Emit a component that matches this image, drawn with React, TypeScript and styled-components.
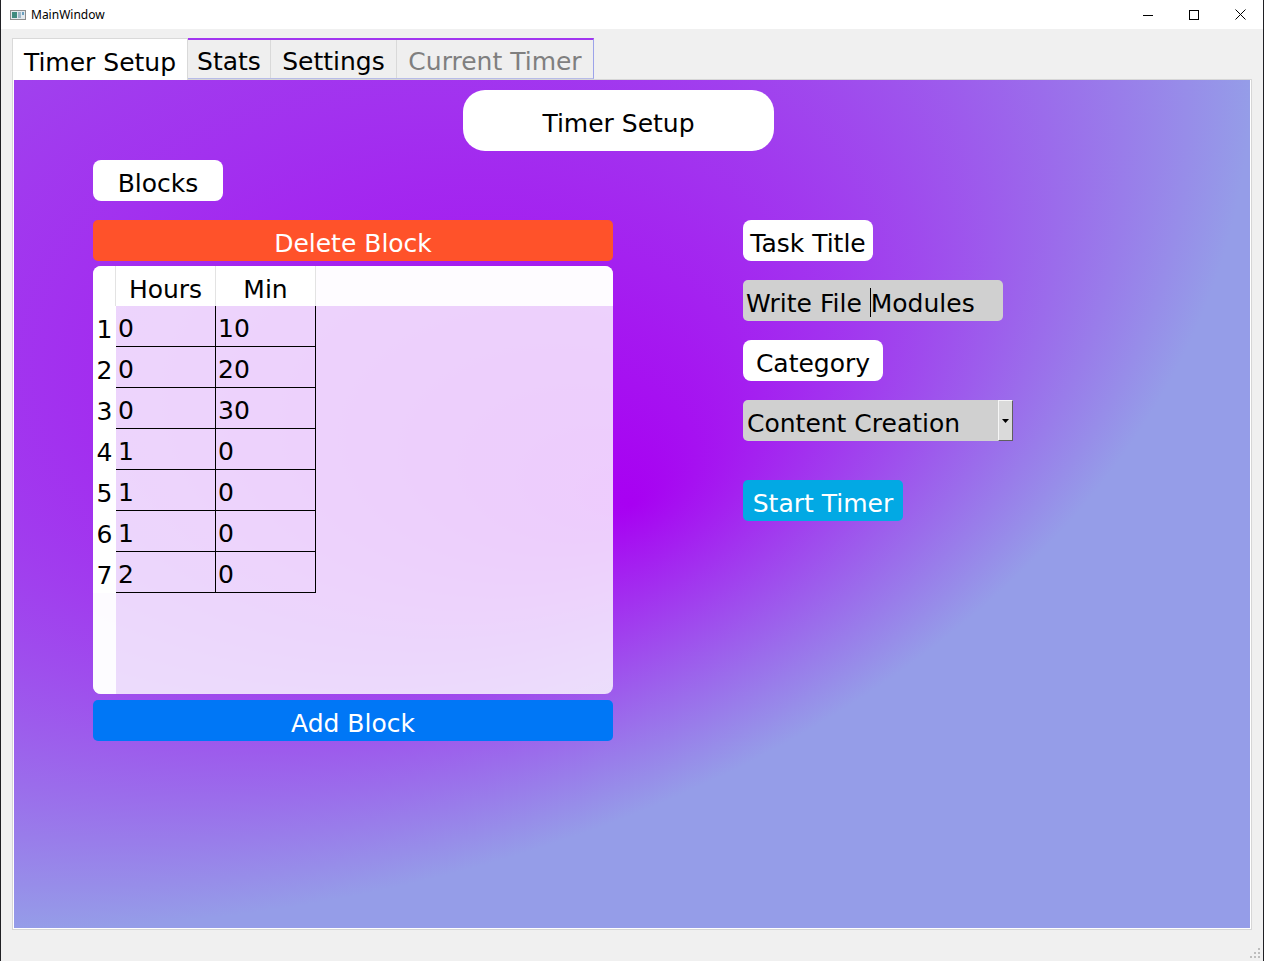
import React from "react";
import styled, { createGlobalStyle } from "styled-components";

const UI_FONT = `"DejaVu Sans", "Liberation Sans", sans-serif`;

const GlobalStyle = createGlobalStyle`
  html, body { margin: 0; padding: 0; background: #f0f0f0; }
  body { overflow: hidden; }
  * { box-sizing: border-box; }
`;

const gradientSvg = `<svg xmlns='http://www.w3.org/2000/svg' viewBox='0 0 1 1' preserveAspectRatio='none'><defs><radialGradient id='g' cx='0' cy='0' r='1' fx='0.5' fy='0.5'><stop offset='0' stop-color='#a800f2'/><stop offset='1' stop-color='#959de8'/></radialGradient></defs><rect width='1' height='1' fill='url(#g)'/></svg>`;
const gradientUrl = `url("data:image/svg+xml,${encodeURIComponent(gradientSvg)}")`;

const Window = styled.div`
  width: 1264px;
  height: 961px;
  display: flex;
  flex-direction: column;
  background: #f0f0f0;
  border-left: 1px solid #202024;
  border-right: 1px solid #202024;
  font-family: ${UI_FONT};
  color: #000;
`;

const TitleBar = styled.div`
  flex: none;
  height: 29px;
  background: #fff;
  display: flex;
  align-items: center;
  padding-left: 9px;
`;

const AppIcon = styled.svg`
  flex: none;
  width: 16px;
  height: 16px;
`;

const TitleText = styled.span`
  margin-left: 5px;
  font-family: "Noto Sans", "Liberation Sans", sans-serif;
  font-size: 12px;
  color: #000;
`;

const Controls = styled.div`
  margin-left: auto;
  display: flex;
  height: 100%;
`;

const ControlButton = styled.div`
  width: 46px;
  height: 29px;
  display: flex;
  align-items: center;
  justify-content: center;
`;

const Central = styled.div`
  flex: none;
  padding: 9px 11px 0 11px;
  display: flex;
  flex-direction: column;
`;

const TabBar = styled.div`
  display: flex;
  align-items: flex-start;
  height: 41px;
  font-size: 25px;
`;

const ActiveTab = styled.div`
  position: relative;
  z-index: 1;
  width: 176px;
  height: 42px;
  background: #fff;
  border: 1px solid #d9d9d9;
  border-bottom: none;
  display: flex;
  align-items: center;
  justify-content: center;
  padding-top: 6px;
`;

const TabGroup = styled.div`
  display: flex;
  height: 41px;
  border-top: 2px solid #a236f0;
  border-right: 1px solid #9ca3ea;
  border-bottom: 1px solid #b7bbe8;
`;

const Tab = styled.div<{ $w: number; $disabled?: boolean; $last?: boolean }>`
  width: ${(p) => p.$w}px;
  height: 100%;
  background: #efefef;
  border-right: ${(p) => (p.$last ? "none" : "1px solid #d9d9d9")};
  color: ${(p) => (p.$disabled ? "#7f7f7f" : "#000")};
  display: flex;
  align-items: center;
  justify-content: center;
  padding-top: 4px;
`;

const Pane = styled.div`
  height: 851px;
  border: 1px solid #d6d6d6;
  box-shadow: inset 1px 0 0 #fff, inset -1px 0 0 #fff, inset 0 -1px 0 #fff;
  background: ${gradientUrl} center / 100% 100% no-repeat;
  padding: 10px 0 0 80px;
  display: flex;
  flex-direction: column;
  font-size: 25px;
`;

const HeaderPill = styled.div`
  margin-left: 370px;
  width: 311px;
  height: 61px;
  border-radius: 22px;
  background: #fff;
  display: flex;
  align-items: center;
  justify-content: center;
  padding-top: 5px;
`;

const Columns = styled.div`
  display: flex;
  align-items: flex-start;
  margin-top: 9px;
`;

const LeftCol = styled.div`
  width: 520px;
  display: flex;
  flex-direction: column;
`;

const RightCol = styled.div`
  margin-left: 130px;
  margin-top: 60px;
  display: flex;
  flex-direction: column;
  gap: 19px;
`;

const Label = styled.div<{ $w: number }>`
  width: ${(p) => p.$w}px;
  height: 41px;
  background: #fff;
  border-radius: 8px;
  display: flex;
  align-items: center;
  justify-content: center;
  padding-top: 5px;
`;

const ActionButton = styled.div<{ $bg: string; $w?: number; $mt?: number }>`
  width: ${(p) => (p.$w ? `${p.$w}px` : "100%")};
  height: 41px;
  margin-top: ${(p) => p.$mt ?? 0}px;
  background: ${(p) => p.$bg};
  color: #fff;
  border-radius: 5px;
  display: flex;
  align-items: center;
  justify-content: center;
  padding-top: 5px;
`;

const TableFrame = styled.div`
  margin-top: 5px;
  height: 428px;
  border-radius: 8px;
  overflow: hidden;
  background: rgba(255, 255, 255, 0.8);
  display: grid;
  grid-template-columns: 23px 1fr;
  grid-template-rows: 40px 1fr;
`;

const Corner = styled.div`
  background: #fff;
  border-right: 1px solid #e3e3e3;
`;

const HeaderRow = styled.div`
  display: flex;
  background: rgba(255, 255, 255, 0.93);
`;

const HeaderCell = styled.div`
  width: 100px;
  height: 100%;
  background: #fff;
  border-right: 1px solid #e3e3e3;
  display: flex;
  align-items: center;
  justify-content: center;
  padding-top: 6px;
`;

const RowHeaderCol = styled.div`
  display: flex;
  flex-direction: column;
  background: rgba(255, 255, 255, 0.9);
`;

const RowNum = styled.div`
  height: 41px;
  background: #fff;
  display: flex;
  align-items: center;
  justify-content: center;
  padding-top: 5px;
`;

const Body = styled.div`
  display: grid;
  grid-template-columns: 100px 100px;
  grid-auto-rows: 41px;
  align-content: start;
`;

const Cell = styled.div`
  border-right: 1px solid #000;
  border-bottom: 1px solid #000;
  padding: 5px 0 0 2px;
  display: flex;
  align-items: center;
`;

const LineEdit = styled.div`
  width: 260px;
  height: 41px;
  background: #d0d0d0;
  border-radius: 5px;
  padding: 5px 0 0 3px;
  display: flex;
  align-items: center;
  white-space: pre;
`;

const Caret = styled.span`
  display: inline-block;
  width: 1px;
  height: 29px;
  margin-top: -2px;
  background: #000;
`;

const Combo = styled.div`
  width: 270px;
  height: 41px;
  display: flex;
  background: #d0d0d0;
  border-radius: 5px 0 0 5px;
`;

const ComboText = styled.div`
  flex: 1;
  padding: 5px 0 0 4px;
  display: flex;
  align-items: center;
  white-space: nowrap;
`;

const DropButton = styled.div`
  width: 15px;
  height: 100%;
  background: #dadada;
  border: 1px solid;
  border-color: #f6f6f6 #5f5f5f #5f5f5f #f6f6f6;
  display: flex;
  align-items: center;
  justify-content: center;
`;

const StatusBar = styled.div`
  flex: 1;
  display: flex;
  justify-content: flex-end;
  align-items: flex-end;
  padding: 0 2px 2px 0;
`;

const GripIcon = styled.svg`
  width: 11px;
  height: 11px;
`;

const rows: [string, string][] = [
  ["0", "10"],
  ["0", "20"],
  ["0", "30"],
  ["1", "0"],
  ["1", "0"],
  ["1", "0"],
  ["2", "0"],
];

export default function App() {
  return (
    <>
      <GlobalStyle />
      <Window>
        <TitleBar>
          <AppIcon viewBox="0 0 16 16">
            <rect x="0.5" y="3.5" width="15" height="9" fill="#e3e9ee" stroke="#8d8d8d" />
            <rect x="2" y="5" width="5" height="6" fill="#3f8b7f" />
            <rect x="8" y="5" width="3" height="6" fill="#9fb8c8" />
            <rect x="12" y="5" width="2" height="3" fill="#6a9fbf" />
          </AppIcon>
          <TitleText>MainWindow</TitleText>
          <Controls>
            <ControlButton>
              <svg width="10" height="10" viewBox="0 0 10 10">
                <line x1="0" y1="5.5" x2="10" y2="5.5" stroke="#000" strokeWidth="1" />
              </svg>
            </ControlButton>
            <ControlButton>
              <svg width="10" height="10" viewBox="0 0 10 10">
                <rect x="0.5" y="0.5" width="9" height="9" fill="none" stroke="#000" strokeWidth="1" />
              </svg>
            </ControlButton>
            <ControlButton>
              <svg width="11" height="11" viewBox="0 0 11 11">
                <path d="M0.5 0.5 L10.5 10.5 M10.5 0.5 L0.5 10.5" stroke="#000" strokeWidth="1" />
              </svg>
            </ControlButton>
          </Controls>
        </TitleBar>

        <Central>
          <TabBar>
            <ActiveTab>Timer Setup</ActiveTab>
            <TabGroup>
              <Tab $w={83}>Stats</Tab>
              <Tab $w={126}>Settings</Tab>
              <Tab $w={196} $disabled $last>
                Current Timer
              </Tab>
            </TabGroup>
          </TabBar>

          <Pane>
            <HeaderPill>Timer Setup</HeaderPill>
            <Columns>
              <LeftCol>
                <Label $w={130}>Blocks</Label>
                <ActionButton $bg="#ff522a" $mt={19}>
                  Delete Block
                </ActionButton>
                <TableFrame>
                  <Corner />
                  <HeaderRow>
                    <HeaderCell>Hours</HeaderCell>
                    <HeaderCell>Min</HeaderCell>
                  </HeaderRow>
                  <RowHeaderCol>
                    {rows.map((_, i) => (
                      <RowNum key={i}>{i + 1}</RowNum>
                    ))}
                  </RowHeaderCol>
                  <Body>
                    {rows.map(([h, m], i) => (
                      <React.Fragment key={i}>
                        <Cell>{h}</Cell>
                        <Cell>{m}</Cell>
                      </React.Fragment>
                    ))}
                  </Body>
                </TableFrame>
                <ActionButton $bg="#0077f6" $mt={6}>
                  Add Block
                </ActionButton>
              </LeftCol>

              <RightCol>
                <Label $w={130}>Task Title</Label>
                <LineEdit>
                  <span>Write File </span>
                  <Caret />
                  <span>Modules</span>
                </LineEdit>
                <Label $w={140}>Category</Label>
                <Combo>
                  <ComboText>Content Creation</ComboText>
                  <DropButton>
                    <svg width="7" height="4" viewBox="0 0 7 4">
                      <polygon points="0,0 7,0 3.5,4" fill="#000" />
                    </svg>
                  </DropButton>
                </Combo>
                <ActionButton $bg="#02a9e4" $w={160} $mt={20}>
                  Start Timer
                </ActionButton>
              </RightCol>
            </Columns>
          </Pane>
        </Central>

        <StatusBar>
          <GripIcon viewBox="0 0 11 11">
            <rect x="8" y="0" width="2" height="2" fill="#bdbdbd" />
            <rect x="4" y="4" width="2" height="2" fill="#bdbdbd" />
            <rect x="8" y="4" width="2" height="2" fill="#bdbdbd" />
            <rect x="0" y="8" width="2" height="2" fill="#bdbdbd" />
            <rect x="4" y="8" width="2" height="2" fill="#bdbdbd" />
            <rect x="8" y="8" width="2" height="2" fill="#bdbdbd" />
          </GripIcon>
        </StatusBar>
      </Window>
    </>
  );
}
